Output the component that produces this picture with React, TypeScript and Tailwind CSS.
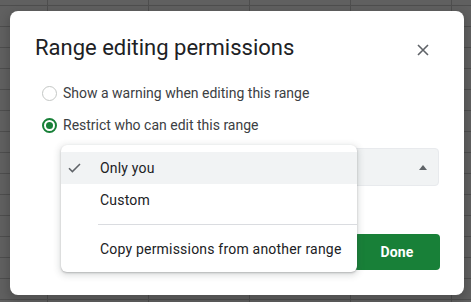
export default function App() {
  return (
    <div className="w-[471px] h-[302px] overflow-hidden bg-[#606060] bg-[linear-gradient(to_right,#4e4e4e_1px,transparent_1px),linear-gradient(to_bottom,#4e4e4e_1px,transparent_1px)] bg-[size:101px_21px] bg-[position:47px_5px] pt-[11px] pl-[10px] font-['Roboto',sans-serif]">
      <div className="relative w-[454px] h-[284px] bg-white rounded-[8px] shadow-[0_4px_8px_3px_rgba(0,0,0,0.15)] flex flex-col">
        <div className="flex items-start justify-between pt-[23px] pl-[25px] pr-[31px]">
          <h1 className="text-[22px] leading-[28px] text-[#202124] font-normal">Range editing permissions</h1>
          <button className="mt-[6px] w-[20px] h-[20px] flex items-center justify-center">
            <svg width="12" height="12" viewBox="0 0 12 12">
              <path d="M1 1L11 11M11 1L1 11" stroke="#5f6368" strokeWidth="1.6" />
            </svg>
          </button>
        </div>

        <div className="mt-[15px] flex flex-col pl-[32px]">
          <label className="h-[32px] flex items-center gap-[6px] text-[14px] leading-[20px] text-[#3c4043]">
            <span className="w-[15px] h-[15px] rounded-full border border-[#c4c7c5] box-border" />
            <span>Show a warning when editing this range</span>
          </label>
          <label className="h-[32px] flex items-center gap-[6px] text-[14px] leading-[20px] text-[#3c4043]">
            <span className="w-[15px] h-[15px] rounded-full border-2 border-[#188038] box-border flex items-center justify-center">
              <span className="w-[7px] h-[7px] rounded-full bg-[#188038]" />
            </span>
            <span>Restrict who can edit this range</span>
          </label>
        </div>

        <div className="mt-[7px] ml-[51px] w-[378px] h-[38px] rounded-[4px] bg-[#f1f3f4] border border-[#e8eaed] flex items-center justify-end pr-[11px]">
          <svg width="8" height="5" viewBox="0 0 8 5">
            <path d="M0 5L4 0L8 5Z" fill="#5f6368" />
          </svg>
        </div>

        <div className="mt-[48px] flex justify-end pr-[24px]">
          <button className="w-[86px] h-[36px] rounded-[4px] bg-[#188038] text-white text-[14px] font-bold tracking-[0.2px]">
            Done
          </button>
        </div>

        <div className="absolute left-[51px] top-[134px] w-[296px] py-[7px] bg-white rounded-[6px] shadow-[0_2px_6px_2px_rgba(60,64,67,0.15),0_1px_2px_rgba(60,64,67,0.3)] text-[14px] leading-[20px] tracking-[0.2px] text-[#202124]">
          <div className="relative h-[32px] bg-[#f1f3f4] flex items-center pl-[39px]">
            <svg className="absolute left-[7px] top-[11px]" width="13" height="10" viewBox="0 0 13 10">
              <path d="M1 5.2L4.4 8.6L12 1" stroke="#5f6368" strokeWidth="1.5" fill="none" />
            </svg>
            <span>Only you</span>
          </div>
          <div className="h-[32px] flex items-center pl-[39px]">Custom</div>
          <div className="my-[8px] ml-[37px] h-px bg-[#dadce0]" />
          <div className="h-[32px] flex items-center pl-[39px]">Copy permissions from another range</div>
        </div>
      </div>
    </div>
  );
}
